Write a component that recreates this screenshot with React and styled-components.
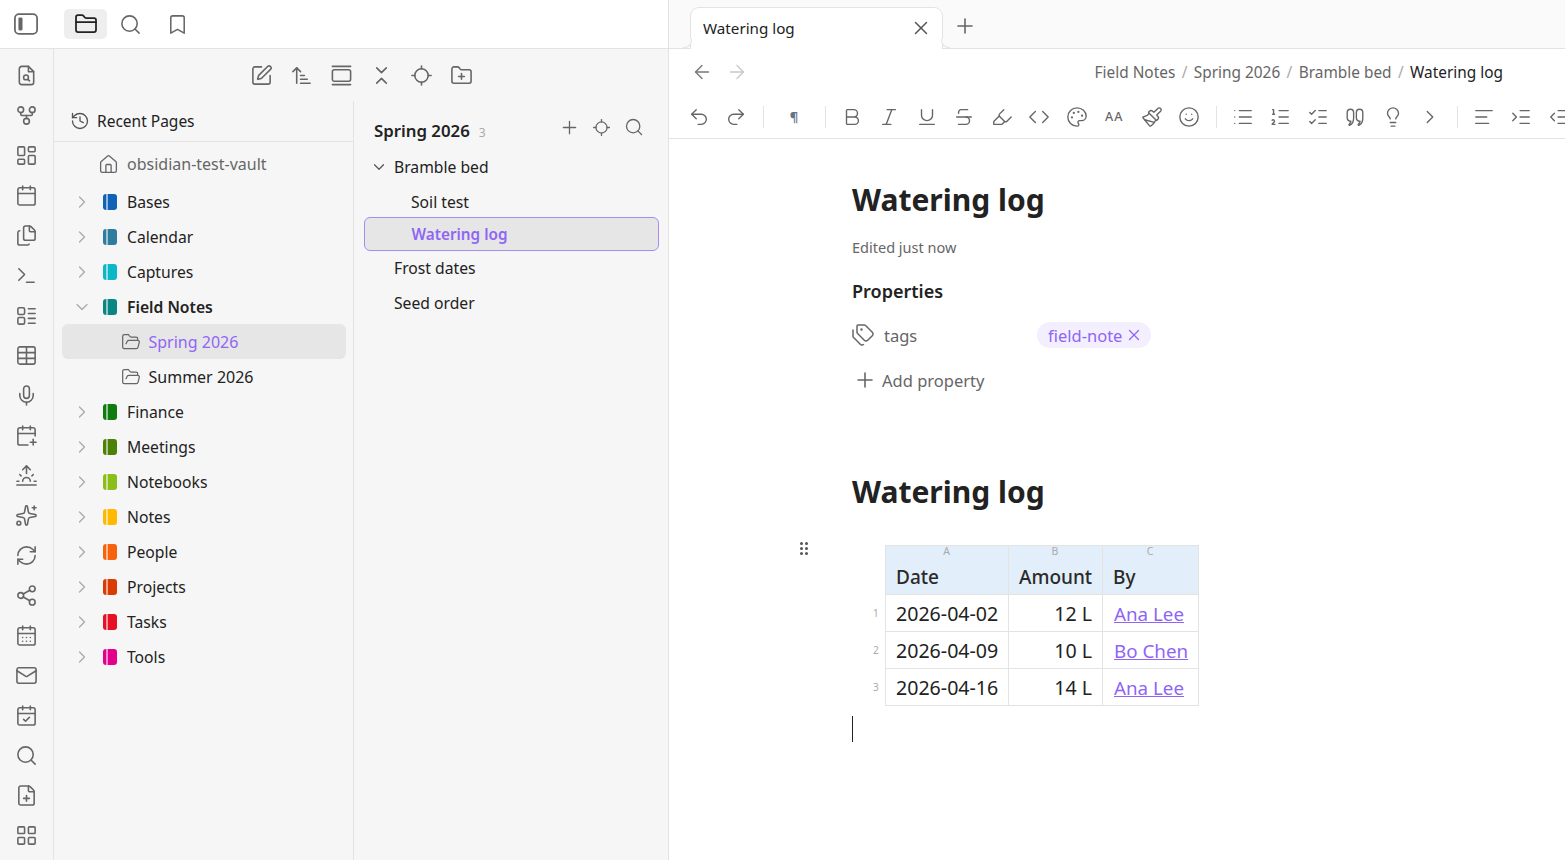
import styled, { createGlobalStyle } from 'styled-components';
import {
	ArrowLeft,
	ArrowRight,
	ArrowUpNarrowWide,
	AlignLeft,
	Bold,
	Bookmark,
	CalendarCheck,
	CalendarDays,
	CalendarPlus,
	Calendar,
	ChevronDown,
	ChevronRight,
	ChevronsDownUp,
	Code,
	FilePlus,
	Files,
	FolderClosed,
	FolderOpen,
	FolderPlus,
	GitFork,
	Highlighter,
	History,
	House,
	IndentDecrease,
	IndentIncrease,
	Italic,
	LayoutDashboard,
	LayoutGrid,
	Lightbulb,
	List,
	ListChecks,
	ListOrdered,
	Locate,
	Mail,
	Mic,
	Paintbrush,
	Palette,
	Plus,
	Redo2,
	RefreshCw,
	Search,
	Share2,
	Smile,
	Sparkles,
	SquarePen,
	Strikethrough,
	Sunrise,
	Table,
	Tags,
	Terminal,
	Underline,
	Undo2,
	X,
} from 'lucide-react';

const FONT = '"Noto Sans", "Open Sans", sans-serif';

const GlobalStyle = createGlobalStyle`
	html, body, #root {
		margin: 0;
		height: 100%;
	}
	body {
		font-family: ${FONT};
		color: #222;
		background: #fff;
		overflow: hidden;
	}
	* {
		box-sizing: border-box;
	}
`;

const Svg = ({ size = 20, strokeWidth = 1.5, children }) => (
	<svg
		width={size}
		height={size}
		viewBox="0 0 24 24"
		fill="none"
		stroke="currentColor"
		strokeWidth={strokeWidth}
		strokeLinecap="round"
		strokeLinejoin="round"
	>
		{children}
	</svg>
);

const SidebarIcon = (props) => (
	<Svg {...props}>
		<rect x="2.5" y="3.5" width="19" height="17" rx="3.5" />
		<rect x="5.5" y="6.5" width="3.5" height="11" rx="1" fill="currentColor" stroke="none" />
	</Svg>
);

const FileFindIcon = (props) => (
	<Svg {...props}>
		<path d="M14 2.5H7a2.5 2.5 0 0 0-2.5 2.5v14A2.5 2.5 0 0 0 7 21.5h10a2.5 2.5 0 0 0 2.5-2.5V8z" />
		<path d="M14 2.5V8h5.5" />
		<circle cx="11.5" cy="14" r="2.5" />
		<path d="m13.5 16 1.6 1.6" />
	</Svg>
);

const ListBoxesIcon = (props) => (
	<Svg {...props}>
		<rect x="3" y="4" width="7" height="7" rx="1.5" />
		<rect x="3" y="14" width="7" height="7" rx="1.5" />
		<path d="M14 5h7M14 10h7M14 15h7M14 20h7" />
	</Svg>
);

const GalleryIcon = (props) => (
	<Svg {...props}>
		<path d="M2.5 2.5h19M2.5 21.5h19" />
		<rect x="2.5" y="6" width="19" height="12" rx="2" />
	</Svg>
);

const QuoteIcon = (props) => (
	<Svg {...props}>
		<path d="M3.5 7a3.5 3.5 0 0 1 7 0v6c0 4-1.5 6.5-4 8-.8.4-1.4-.4-.8-1 1-1 1.6-2 1.8-3.5A3.5 3.5 0 0 1 3.5 13z" />
		<path d="M13.5 7a3.5 3.5 0 0 1 7 0v6c0 4-1.5 6.5-4 8-.8.4-1.4-.4-.8-1 1-1 1.6-2 1.8-3.5a3.5 3.5 0 0 1-4-3.5z" />
	</Svg>
);

const RAIL_ICONS = [
	FileFindIcon,
	GitFork,
	LayoutDashboard,
	Calendar,
	Files,
	Terminal,
	ListBoxesIcon,
	Table,
	Mic,
	CalendarPlus,
	Sunrise,
	Sparkles,
	RefreshCw,
	Share2,
	CalendarDays,
	Mail,
	CalendarCheck,
	Search,
	FilePlus,
	LayoutGrid,
];

const FOLDERS = [
	{ name: 'Bases', color: '#0f62b5' },
	{ name: 'Calendar', color: '#2e7d9e' },
	{ name: 'Captures', color: '#0bb8c8' },
	{
		name: 'Field Notes',
		color: '#0a8585',
		open: true,
		children: [
			{ name: 'Spring 2026', active: true },
			{ name: 'Summer 2026' },
		],
	},
	{ name: 'Finance', color: '#107c10' },
	{ name: 'Meetings', color: '#498205' },
	{ name: 'Notebooks', color: '#8cbd18' },
	{ name: 'Notes', color: '#ffb900' },
	{ name: 'People', color: '#f7630c' },
	{ name: 'Projects', color: '#da3b01' },
	{ name: 'Tasks', color: '#e81123' },
	{ name: 'Tools', color: '#e3008c' },
];

const TABLE_ROWS = [
	{ date: '2026-04-02', amount: '12 L', by: 'Ana Lee' },
	{ date: '2026-04-09', amount: '10 L', by: 'Bo Chen' },
	{ date: '2026-04-16', amount: '14 L', by: 'Ana Lee' },
];

const Page = styled.div`
	display: flex;
	height: 100vh;
	width: 100%;
`;

const LeftPane = styled.div`
	width: 669px;
	flex: none;
	display: flex;
	flex-direction: column;
	border-right: 1px solid #e3e3e3;
`;

const TopBar = styled.div`
	height: 49px;
	flex: none;
	display: flex;
	align-items: center;
	border-bottom: 1px solid #e3e3e3;
	color: #666;
	padding-left: 12px;
`;

const TopButton = styled.div`
	width: ${(p) => p.$width || 47}px;
	height: 30px;
	margin-left: ${(p) => p.$left || 0}px;
	display: flex;
	align-items: center;
	justify-content: center;
	border-radius: 5px;
	background: ${(p) => (p.$active ? '#eeeeee' : 'transparent')};
	color: ${(p) => (p.$active ? '#222' : '#666')};
`;

const PaneBody = styled.div`
	flex: 1;
	display: flex;
	min-height: 0;
`;

const Rail = styled.div`
	width: 54px;
	flex: none;
	background: #f6f6f6;
	border-right: 1px solid #e3e3e3;
	padding: 6px 1px 0 0;
	color: #666;
`;

const RailItem = styled.div`
	height: 40px;
	display: flex;
	align-items: center;
	justify-content: center;
`;

const Panel = styled.div`
	flex: 1;
	display: flex;
	flex-direction: column;
	min-width: 0;
	background: #f6f6f6;
`;

const PanelToolbar = styled.div`
	height: 52px;
	flex: none;
	display: flex;
	align-items: center;
	justify-content: center;
	color: #666;
`;

const ToolSlot = styled.div`
	width: 40px;
	display: flex;
	justify-content: center;
`;

const Columns = styled.div`
	flex: 1;
	display: flex;
	min-height: 0;
`;

const TreeColumn = styled.div`
	width: 300px;
	flex: none;
	border-right: 1px solid #e3e3e3;
`;

const RecentRow = styled.div`
	height: 41px;
	display: flex;
	align-items: center;
	padding-left: 16px;
	gap: 7px;
	font-size: 15.5px;
	border-bottom: 1px solid #e3e3e3;
	svg {
		color: #555;
	}
`;

const VaultRow = styled.div`
	height: 42px;
	padding: 2px 0 0 44px;
	display: flex;
	align-items: center;
	gap: 8px;
	color: #666;
	font-size: 16px;
`;

const TreeRow = styled.div`
	height: 35px;
	margin: 0 7px 0 8px;
	padding-left: ${(p) => (p.$child ? 59 : 8)}px;
	display: flex;
	align-items: center;
	border-radius: 6px;
	font-size: ${(p) => (p.$child ? 16 : 15.7)}px;
	font-weight: ${(p) => (p.$open ? 600 : 400)};
	background: ${(p) => (p.$active ? '#e6e6e6' : 'transparent')};
	color: ${(p) => (p.$active ? '#8f65f5' : '#222')};
`;

const Caret = styled.span`
	width: 24px;
	display: flex;
	justify-content: center;
	color: #aaa;
`;

const Notebook = styled.span`
	width: 14px;
	height: 16px;
	margin: 0 10px 0 9px;
	border-radius: 3px;
	background: ${(p) => p.$color};
	position: relative;
	flex: none;
	&::before {
		content: '';
		position: absolute;
		left: 3px;
		top: 0;
		bottom: 0;
		width: 1.5px;
		background: rgba(255, 255, 255, 0.55);
	}
`;

const FolderGlyph = styled.span`
	display: flex;
	margin-right: 7.5px;
	color: #666;
`;

const NotesColumn = styled.div`
	flex: 1;
	min-width: 0;
	padding-top: 6px;
`;

const NotesHeader = styled.div`
	height: 42px;
	display: flex;
	align-items: center;
	padding: 0 24px 0 20px;
	color: #666;
`;

const NotesTitle = styled.span`
	font-size: 16.8px;
	font-weight: 600;
	color: #222;
	margin-top: 5px;
`;

const NotesCount = styled.span`
	font-size: 12px;
	color: #aaa;
	margin: 8px auto 0 9px;
`;

const HeaderAction = styled.span`
	display: flex;
	margin-left: ${(p) => p.$gap || 0}px;
	margin-top: -2px;
`;

const NoteRow = styled.div`
	height: 35px;
	display: flex;
	align-items: center;
	padding-left: ${(p) => p.$indent}px;
	font-size: 15.7px;
	color: #222;
	svg {
		color: #555;
		margin-right: 6px;
	}
`;

const ActiveNote = styled.div`
	height: 34px;
	margin: -2px 9px -1px 10px;
	display: flex;
	align-items: center;
	padding-left: 46.5px;
	border: 1px solid #a78bf5;
	border-radius: 6px;
	background: #e6e6e6;
	color: #8f65f5;
	font-size: 15.3px;
	font-weight: 600;
`;

const RightPane = styled.div`
	flex: 1;
	min-width: 0;
	display: flex;
	flex-direction: column;
`;

const TabBar = styled.div`
	height: 49px;
	flex: none;
	display: flex;
	align-items: flex-end;
	padding-left: 21px;
	background: #fafafa;
	border-bottom: 1px solid #e3e3e3;
`;

const Tab = styled.div`
	position: relative;
	width: 253px;
	height: 42px;
	margin-bottom: -1px;
	display: flex;
	align-items: center;
	justify-content: space-between;
	padding: 0 10px 2px 12px;
	background: #fff;
	border: 1px solid #e3e3e3;
	border-bottom: none;
	border-radius: 9px 9px 0 0;
	font-size: 15.2px;
	color: #222;
	svg {
		color: #555;
	}
	&::before,
	&::after {
		content: '';
		position: absolute;
		bottom: 1px;
		width: 8px;
		height: 8px;
		background: #fafafa;
		border-bottom: 1px solid #e3e3e3;
	}
	&::before {
		left: -8px;
		border-right: 1px solid #e3e3e3;
		border-bottom-right-radius: 8px;
	}
	&::after {
		right: -8px;
		border-left: 1px solid #e3e3e3;
		border-bottom-left-radius: 8px;
	}
`;

const NewTab = styled.div`
	display: flex;
	align-self: center;
	margin: 4px 0 0 10px;
	color: #666;
`;

const NavBar = styled.div`
	height: 46px;
	flex: none;
	display: flex;
	align-items: center;
	padding: 0 62px 0 22px;
	color: #777;
`;

const NavBack = styled.span`
	display: flex;
	margin-right: 13px;
`;

const NavForward = styled.span`
	display: flex;
	color: #c8c8c8;
	margin-right: auto;
`;

const Crumb = styled.span`
	font-size: 15.4px;
	color: ${(p) => (p.$current ? '#222' : '#666')};
`;

const CrumbSlash = styled.span`
	font-size: 15.4px;
	color: #aaa;
	margin: 0 6.4px;
`;

const FormatBar = styled.div`
	height: 44px;
	flex: none;
	display: flex;
	align-items: center;
	padding-left: 11px;
	border-bottom: 1px solid #e3e3e3;
	color: #666;
	overflow: hidden;
`;

const FormatButton = styled.div`
	width: ${(p) => p.$width || 37.5}px;
	flex: none;
	display: flex;
	justify-content: center;
	align-items: center;
`;

const FormatSep = styled.div`
	width: 1px;
	height: 22px;
	flex: none;
	margin: 0 7.5px;
	background: #e3e3e3;
`;

const Pilcrow = styled.span`
	font-size: 13px;
	font-weight: 700;
	color: #667385;
`;

const CaseGlyph = styled.span`
	font-size: 12.5px;
	font-weight: 500;
	letter-spacing: 1px;
	color: #666;
`;

const Editor = styled.div`
	flex: 1;
	padding: 41px 0 0 183px;
	min-height: 0;
`;

const Title = styled.h1`
	margin: ${(p) => p.$top || 0}px 0 0;
	height: 40px;
	line-height: 40px;
	font-size: 30px;
	font-weight: 700;
	color: #222;
`;

const Edited = styled.div`
	margin-top: 17px;
	height: 20px;
	line-height: 20px;
	font-size: 14.5px;
	color: #666;
`;

const PropsHeading = styled.div`
	margin-top: 22px;
	height: 24px;
	line-height: 24px;
	font-size: 18px;
	font-weight: 600;
	color: #222;
`;

const PropRow = styled.div`
	margin-top: 15px;
	height: 34px;
	display: flex;
	align-items: center;
`;

const PropKey = styled.div`
	width: 185px;
	display: flex;
	align-items: center;
	gap: 9px;
	font-size: 16.5px;
	color: #666;
	svg {
		margin-left: -1px;
	}
`;

const TagPill = styled.span`
	height: 26px;
	padding: 0 8px 0 11px;
	display: flex;
	align-items: center;
	gap: 3px;
	border-radius: 13px;
	background: #f3effe;
	color: #8f65f5;
	font-size: 16.5px;
`;

const AddProperty = styled.div`
	margin-top: 11px;
	height: 34px;
	padding-left: 1px;
	display: flex;
	align-items: center;
	gap: 5px;
	font-size: 16.5px;
	color: #666;
`;

const SheetWrap = styled.div`
	position: relative;
	margin: 33px 0 0 33px;
	width: fit-content;
`;

const DragHandle = styled.div`
	position: absolute;
	left: -85px;
	top: -3px;
	display: grid;
	grid-template-columns: 3px 3px;
	gap: 2px 2px;
	i {
		width: 3px;
		height: 3px;
		border-radius: 50%;
		background: #555;
	}
`;

const Sheet = styled.table`
	border-collapse: collapse;
	table-layout: fixed;
	width: 314px;
	font-size: 19.6px;
	color: #222;
`;

const HeadCell = styled.th`
	position: relative;
	height: 49px;
	padding: 13px 10px 0;
	border: 1px solid #e3e3e3;
	background: #e3eefb;
	font-size: 19px;
	font-weight: 500;
	text-align: ${(p) => p.$align || 'left'};
	color: #2a2a2a;
`;

const ColLetter = styled.span`
	position: absolute;
	top: -2px;
	left: -1px;
	right: 0;
	text-align: center;
	font-size: 10.5px;
	font-weight: 400;
	color: #aaa;
`;

const Cell = styled.td`
	position: relative;
	height: 37px;
	padding: 0 ${(p) => (p.$link ? 9 : 10)}px 0 ${(p) => (p.$link ? 11 : 10)}px;
	border: 1px solid #e3e3e3;
	white-space: nowrap;
	text-align: ${(p) => p.$align || 'left'};
`;

const RowNumber = styled.span`
	position: absolute;
	left: -13px;
	top: 11px;
	font-size: 10px;
	color: #aaa;
`;

const PersonLink = styled.a`
	color: #8f65f5;
	font-size: 18.8px;
	text-decoration: underline;
`;

const TextCaret = styled.div`
	margin-top: 10px;
	width: 1px;
	height: 26px;
	background: #222;
`;

const FORMAT_GROUP_A = [Bold, Italic, Underline, Strikethrough, Highlighter, Code, Palette];
const FORMAT_GROUP_B = [List, ListOrdered, ListChecks, QuoteIcon, Lightbulb, ChevronRight];
const FORMAT_GROUP_C = [AlignLeft, IndentIncrease, IndentDecrease];

const App = () => (
	<Page>
		<GlobalStyle />
		<LeftPane>
			<TopBar>
				<SidebarIcon size={28} />
				<TopButton $width={43} $active $left={24}>
					<FolderClosed size={24} strokeWidth={1.75} />
				</TopButton>
				<TopButton>
					<Search size={23} strokeWidth={1.6} />
				</TopButton>
				<TopButton>
					<Bookmark size={23} strokeWidth={1.6} />
				</TopButton>
			</TopBar>
			<PaneBody>
				<Rail>
					{RAIL_ICONS.map((Icon, i) => (
						<RailItem key={i}>
							<Icon size={23} strokeWidth={1.65} />
						</RailItem>
					))}
				</Rail>
				<Panel>
					<PanelToolbar>
						{[SquarePen, ArrowUpNarrowWide, GalleryIcon, ChevronsDownUp, Locate, FolderPlus].map(
							(Icon, i) => (
								<ToolSlot key={i}>
									<Icon size={23} strokeWidth={1.65} />
								</ToolSlot>
							),
						)}
					</PanelToolbar>
					<Columns>
						<TreeColumn>
							<RecentRow>
								<History size={20} strokeWidth={1.6} />
								Recent Pages
							</RecentRow>
							<VaultRow>
								<House size={21} strokeWidth={1.5} />
								obsidian-test-vault
							</VaultRow>
							{FOLDERS.map((folder) => (
								<div key={folder.name}>
									<TreeRow $open={folder.open}>
										<Caret>
											{folder.open ? (
												<ChevronDown size={20} strokeWidth={1.5} />
											) : (
												<ChevronRight size={20} strokeWidth={1.5} />
											)}
										</Caret>
										<Notebook $color={folder.color} />
										{folder.name}
									</TreeRow>
									{folder.children?.map((child) => (
										<TreeRow key={child.name} $child $active={child.active}>
											<FolderGlyph>
												<FolderOpen size={20} strokeWidth={1.5} />
											</FolderGlyph>
											{child.name}
										</TreeRow>
									))}
								</div>
							))}
						</TreeColumn>
						<NotesColumn>
							<NotesHeader>
								<NotesTitle>Spring 2026</NotesTitle>
								<NotesCount>3</NotesCount>
								<HeaderAction>
									<Plus size={21} strokeWidth={1.5} />
								</HeaderAction>
								<HeaderAction $gap={12}>
									<Locate size={19} strokeWidth={1.6} />
								</HeaderAction>
								<HeaderAction $gap={13}>
									<Search size={20} strokeWidth={1.6} />
								</HeaderAction>
							</NotesHeader>
							<NoteRow $indent={16}>
								<ChevronDown size={18} strokeWidth={1.6} />
								Bramble bed
							</NoteRow>
							<NoteRow $indent={57}>Soil test</NoteRow>
							<ActiveNote>Watering log</ActiveNote>
							<NoteRow $indent={40}>Frost dates</NoteRow>
							<NoteRow $indent={40}>Seed order</NoteRow>
						</NotesColumn>
					</Columns>
				</Panel>
			</PaneBody>
		</LeftPane>
		<RightPane>
			<TabBar>
				<Tab>
					Watering log
					<X size={22} strokeWidth={1.6} />
				</Tab>
				<NewTab>
					<Plus size={24} strokeWidth={1.6} />
				</NewTab>
			</TabBar>
			<NavBar>
				<NavBack>
					<ArrowLeft size={22} strokeWidth={1.5} />
				</NavBack>
				<NavForward>
					<ArrowRight size={22} strokeWidth={1.5} />
				</NavForward>
				<Crumb>Field Notes</Crumb>
				<CrumbSlash>/</CrumbSlash>
				<Crumb>Spring 2026</Crumb>
				<CrumbSlash>/</CrumbSlash>
				<Crumb>Bramble bed</Crumb>
				<CrumbSlash>/</CrumbSlash>
				<Crumb $current>Watering log</Crumb>
			</NavBar>
			<FormatBar>
				<FormatButton>
					<Undo2 size={22} strokeWidth={1.5} />
				</FormatButton>
				<FormatButton>
					<Redo2 size={22} strokeWidth={1.5} />
				</FormatButton>
				<FormatSep />
				<FormatButton $width={46}>
					<Pilcrow>¶</Pilcrow>
				</FormatButton>
				<FormatSep />
				{FORMAT_GROUP_A.map((Icon, i) => (
					<FormatButton key={i}>
						<Icon size={22} strokeWidth={1.5} />
					</FormatButton>
				))}
				<FormatButton>
					<CaseGlyph>AA</CaseGlyph>
				</FormatButton>
				<FormatButton>
					<Paintbrush size={22} strokeWidth={1.5} />
				</FormatButton>
				<FormatButton>
					<Smile size={22} strokeWidth={1.5} />
				</FormatButton>
				<FormatSep />
				{FORMAT_GROUP_B.map((Icon, i) => (
					<FormatButton key={i}>
						<Icon size={22} strokeWidth={1.5} />
					</FormatButton>
				))}
				<FormatSep />
				{FORMAT_GROUP_C.map((Icon, i) => (
					<FormatButton key={i}>
						<Icon size={22} strokeWidth={1.5} />
					</FormatButton>
				))}
			</FormatBar>
			<Editor>
				<Title>Watering log</Title>
				<Edited>Edited just now</Edited>
				<PropsHeading>Properties</PropsHeading>
				<PropRow>
					<PropKey>
						<Tags size={24} strokeWidth={1.5} />
						tags
					</PropKey>
					<TagPill>
						field-note
						<X size={18} strokeWidth={1.75} />
					</TagPill>
				</PropRow>
				<AddProperty>
					<Plus size={24} strokeWidth={1.6} />
					Add property
				</AddProperty>
				<Title $top={75}>Watering log</Title>
				<SheetWrap>
					<DragHandle>
						{[0, 1, 2, 3, 4, 5].map((n) => (
							<i key={n} />
						))}
					</DragHandle>
					<Sheet>
						<colgroup>
							<col style={{ width: 123 }} />
							<col style={{ width: 94 }} />
							<col style={{ width: 96 }} />
						</colgroup>
						<thead>
							<tr>
								<HeadCell>
									<ColLetter>A</ColLetter>
									Date
								</HeadCell>
								<HeadCell $align="right">
									<ColLetter>B</ColLetter>
									Amount
								</HeadCell>
								<HeadCell>
									<ColLetter>C</ColLetter>
									By
								</HeadCell>
							</tr>
						</thead>
						<tbody>
							{TABLE_ROWS.map((row, i) => (
								<tr key={row.date}>
									<Cell>
										<RowNumber>{i + 1}</RowNumber>
										{row.date}
									</Cell>
									<Cell $align="right">{row.amount}</Cell>
									<Cell $link>
										<PersonLink href="#">{row.by}</PersonLink>
									</Cell>
								</tr>
							))}
						</tbody>
					</Sheet>
				</SheetWrap>
				<TextCaret />
			</Editor>
		</RightPane>
	</Page>
);

export default App;
